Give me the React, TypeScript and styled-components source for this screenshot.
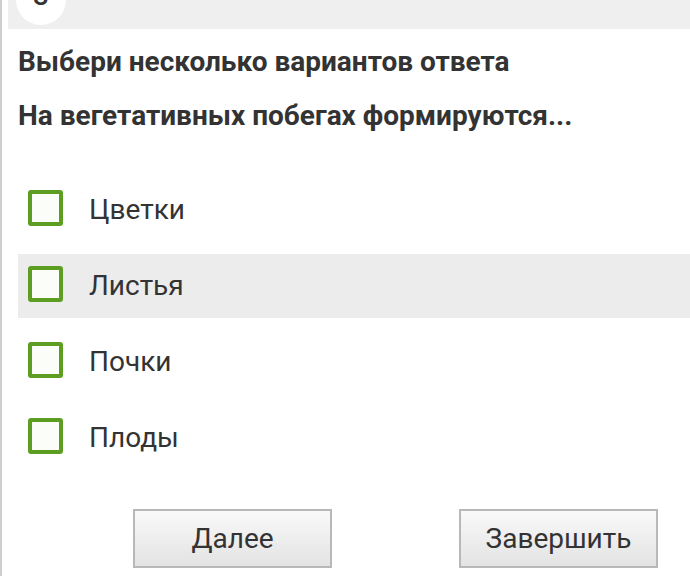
import React from "react";
import styled, { createGlobalStyle } from "styled-components";

const Global = createGlobalStyle`
  html, body { margin: 0; padding: 0; background: #fff; }
  body { font-family: Roboto, "Noto Sans", sans-serif; color: #333; }
`;

const Page = styled.div`
  width: 690px;
  height: 576px;
  overflow: hidden;
  border-left: 2px solid #cfcfcf;
  box-sizing: border-box;
  padding-left: 6px;
  display: flex;
  flex-direction: column;
`;

const Header = styled.div`
  position: relative;
  height: 29px;
  background: #efefef;
  flex-shrink: 0;
`;

const NumberBadge = styled.div`
  position: absolute;
  left: 8px;
  top: -25px;
  width: 50px;
  height: 50px;
  border-radius: 50%;
  background: #fff;
  display: flex;
  align-items: center;
  justify-content: center;
  box-sizing: border-box;
  padding-bottom: 10px;
  font-size: 28px;
  font-weight: 500;
  color: #333;
`;

const Body = styled.div`
  padding: 0 0 0 10px;
  display: flex;
  flex-direction: column;
`;

const Heading = styled.div`
  font-weight: 700;
  font-size: 28px;
  line-height: 33px;
  color: #333;
  margin-top: 16px;
`;

const Question = styled(Heading)`
  margin-top: 21px;
`;

const Options = styled.div`
  display: flex;
  flex-direction: column;
  gap: 12px;
  margin-top: 46px;
`;

const Row = styled.div<{ $hover?: boolean }>`
  height: 64px;
  display: flex;
  align-items: center;
  gap: 26px;
  padding-left: 10px;
  background: ${(p) => (p.$hover ? "#ececec" : "transparent")};
`;

const Box = styled.div`
  width: 27px;
  height: 28px;
  margin-bottom: 4px;
  border: 4px solid #5b9e22;
  border-radius: 3px;
  background: #fbfdf8;
`;

const Label = styled.span`
  font-size: 28px;
  color: #333;
  margin-bottom: 2px;
`;

const Buttons = styled.div`
  display: flex;
  gap: 127px;
  margin-top: 39px;
  padding-left: 115px;
`;

const Button = styled.button`
  width: 199px;
  height: 59px;
  border: 2px solid #b8b8b8;
  background: linear-gradient(#f9f9f9, #e3e3e3);
  font-family: Roboto, "Noto Sans", sans-serif;
  font-size: 28px;
  color: #333;
  padding: 0;
`;

const options = ["Цветки", "Листья", "Почки", "Плоды"];

export default function App() {
  return (
    <>
      <Global />
      <Page>
        <Header>
          <NumberBadge>3</NumberBadge>
        </Header>
        <Body>
          <Heading>Выбери несколько вариантов ответа</Heading>
          <Question>На вегетативных побегах формируются...</Question>
          <Options>
            {options.map((o, i) => (
              <Row key={o} $hover={i === 1}>
                <Box />
                <Label>{o}</Label>
              </Row>
            ))}
          </Options>
          <Buttons>
            <Button>Далее</Button>
            <Button>Завершить</Button>
          </Buttons>
        </Body>
      </Page>
    </>
  );
}
